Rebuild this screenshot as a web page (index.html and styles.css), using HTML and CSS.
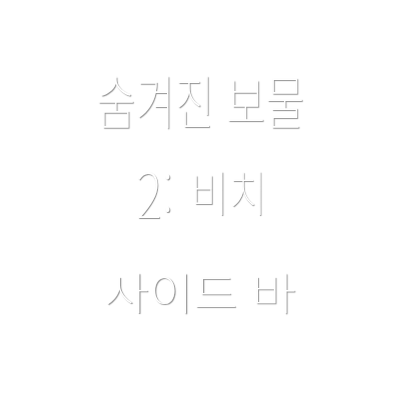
FILE: index.html
```html
<!DOCTYPE html>
<html lang="ko">
<head>
	<meta charset="utf-8">
	<title>숨겨진 보물 2: 비치 사이드 바</title>
	<link rel="stylesheet" href="styles.css">
</head>
<body>
	<div class="cover">
		<h1 class="line line-one">숨겨진 보물</h1>
		<h1 class="line line-two"><span class="number">2:</span> 비치</h1>
		<h1 class="line line-three">사이드 바</h1>
	</div>
</body>
</html>
```

FILE: styles.css
```css
body {
	margin: 0;
	background-color: #fff;
}

.cover {
	width: 400px;
	height: 400px;
	display: flex;
	flex-direction: column;
	align-items: center;
	padding-top: 67px;
	box-sizing: border-box;
	gap: 32px;
}

.line {
	margin: 0;
	height: 64px;
	line-height: 64px;
	font-family: "Noto Sans CJK KR", sans-serif;
	font-size: 44px;
	font-weight: 100;
	color: #fff;
	text-shadow: 1px 1px 1px #8f8f8f;
	white-space: nowrap;
	filter: grayscale(1);
}

.line-one {
	transform: scale(0.97, 1.32);
}

.line-two {
	transform: translateY(-11px) scale(0.94, 1.08);
}

.line-three {
	transform: scale(1.1, 1);
}

.number {
	display: inline-block;
	font-size: 58px;
	margin-right: 4px;
	transform: translateY(7px) scale(0.9, 0.98);
}
```
